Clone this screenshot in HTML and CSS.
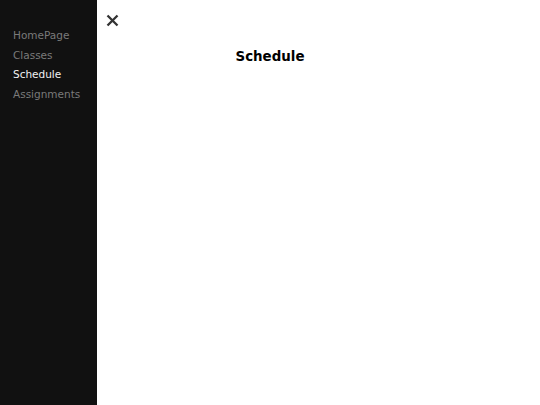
FILE: index.html
```html
<!DOCTYPE html>
<html>
<head>
<meta charset="utf-8">
<link rel="stylesheet" href="styles.css">
</head>
<body>
<nav class="sidenav">
  <a class="close" href="#" aria-label="Close">
    <svg width="13" height="13" viewBox="0 0 13 13"><path d="M1.5 1.5 L11.5 11.5 M11.5 1.5 L1.5 11.5" stroke="#333" stroke-width="2.3" fill="none"/></svg>
  </a>
  <ul class="links">
    <li><a href="#">HomePage</a></li>
    <li><a href="#">Classes</a></li>
    <li><a class="active" href="#">Schedule</a></li>
    <li><a href="#">Assignments</a></li>
  </ul>
</nav>
<main class="content">
  <h1 class="title">Schedule</h1>
</main>
</body>
</html>
```
FILE: styles.css
```css
html, body {
  margin: 0;
  padding: 0;
  height: 100%;
  background: #fff;
  font-family: "DejaVu Sans", sans-serif;
}
.sidenav {
  position: fixed;
  top: 0;
  left: 0;
  bottom: 0;
  width: 97px;
  background: #111;
}
.close {
  position: absolute;
  left: 106px;
  top: 14px;
  display: block;
  width: 13px;
  height: 13px;
  line-height: 0;
}
.links {
  list-style: none;
  margin: 0;
  padding: 26px 0 0 13px;
}
.links a {
  display: block;
  font-size: 10.5px;
  line-height: 19.5px;
  color: #7a7a7a;
  text-decoration: none;
}
.links a.active {
  color: #f1f1f1;
}
.content {
  text-align: center;
  padding-top: 47px;
}
.title {
  margin: 0;
  font-size: 13.4px;
  line-height: 20px;
  font-weight: bold;
  color: #000;
}
```
